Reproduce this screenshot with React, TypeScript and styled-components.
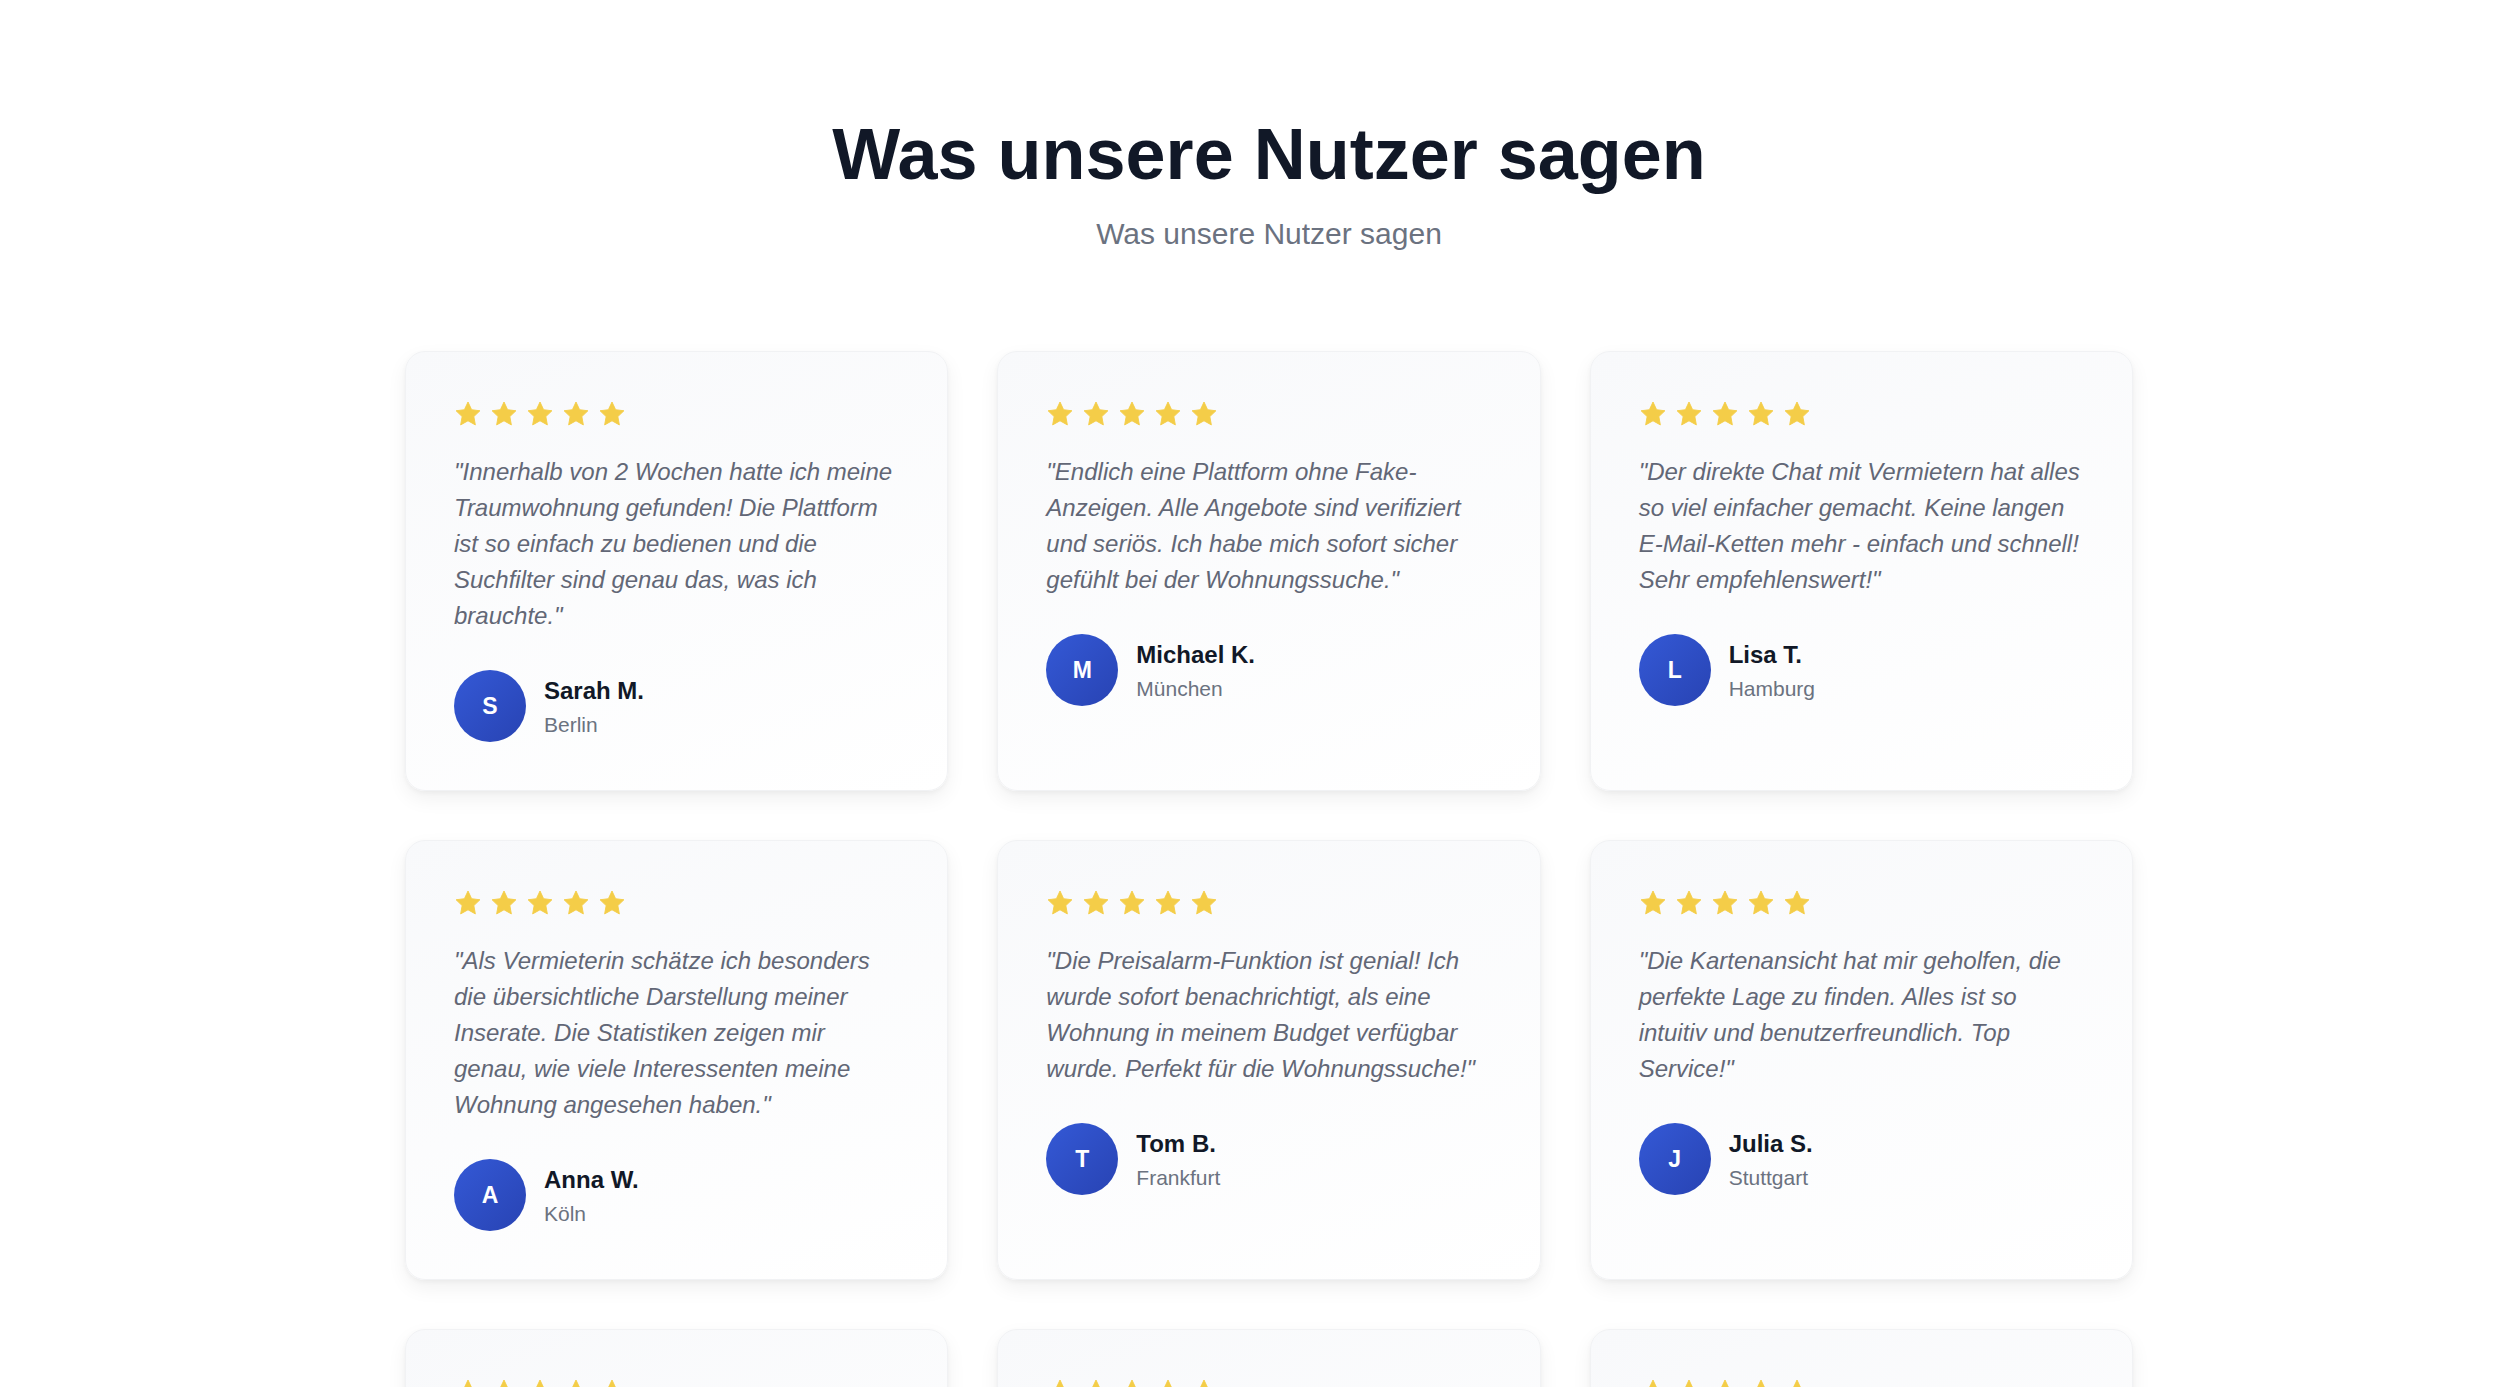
import React from 'react';
import styled, {createGlobalStyle} from 'styled-components';

interface Testimonial {
  quote: string;
  name: string;
  city: string;
}

const testimonials: Testimonial[] = [
  {
    quote:
      'Innerhalb von 2 Wochen hatte ich meine Traumwohnung gefunden! Die Plattform ist so einfach zu bedienen und die Suchfilter sind genau das, was ich brauchte.',
    name: 'Sarah M.',
    city: 'Berlin',
  },
  {
    quote:
      'Endlich eine Plattform ohne Fake-Anzeigen. Alle Angebote sind verifiziert und seriös. Ich habe mich sofort sicher gefühlt bei der Wohnungssuche.',
    name: 'Michael K.',
    city: 'München',
  },
  {
    quote:
      'Der direkte Chat mit Vermietern hat alles so viel einfacher gemacht. Keine langen E-Mail-Ketten mehr - einfach und schnell! Sehr empfehlenswert!',
    name: 'Lisa T.',
    city: 'Hamburg',
  },
  {
    quote:
      'Als Vermieterin schätze ich besonders die übersichtliche Darstellung meiner Inserate. Die Statistiken zeigen mir genau, wie viele Interessenten meine Wohnung angesehen haben.',
    name: 'Anna W.',
    city: 'Köln',
  },
  {
    quote:
      'Die Preisalarm-Funktion ist genial! Ich wurde sofort benachrichtigt, als eine Wohnung in meinem Budget verfügbar wurde. Perfekt für die Wohnungssuche!',
    name: 'Tom B.',
    city: 'Frankfurt',
  },
  {
    quote:
      'Die Kartenansicht hat mir geholfen, die perfekte Lage zu finden. Alles ist so intuitiv und benutzerfreundlich. Top Service!',
    name: 'Julia S.',
    city: 'Stuttgart',
  },
  {
    quote:
      'Schnelle Rückmeldungen und ehrliche Angebote. So macht die Wohnungssuche endlich wieder Spaß!',
    name: 'Jonas F.',
    city: 'Leipzig',
  },
  {
    quote:
      'Die Besichtigungstermine lassen sich direkt online vereinbaren. Das hat mir sehr viel Zeit gespart.',
    name: 'Miriam H.',
    city: 'Düsseldorf',
  },
  {
    quote:
      'Übersichtlich, modern und zuverlässig. Ich habe meine neue Wohnung in Rekordzeit gefunden.',
    name: 'David L.',
    city: 'Dresden',
  },
];

const GlobalStyle = createGlobalStyle`
  html, body {
    margin: 0;
    padding: 0;
    background: #ffffff;
  }

  body {
    font-family: 'Liberation Sans', Arial, sans-serif;
    color: #111827;
  }

  * {
    box-sizing: border-box;
  }
`;

const Page = styled.section`
  padding: 111px 0 96px 31px;
`;

const Container = styled.div`
  width: 1728px;
  margin: 0 auto;
`;

const Header = styled.header`
  text-align: center;
  margin-bottom: 95px;
`;

const Title = styled.h2`
  margin: 0 0 14px;
  font-size: 72px;
  line-height: 1.2;
  font-weight: 700;
  color: #111827;
`;

const Subtitle = styled.p`
  margin: 0;
  font-size: 30px;
  line-height: 1.5;
  color: #6b7280;
`;

const Grid = styled.div`
  display: grid;
  grid-template-columns: repeat(3, 1fr);
  column-gap: 49px;
  row-gap: 49px;
`;

const Card = styled.article`
  display: flex;
  flex-direction: column;
  padding: 48px;
  border-radius: 20px;
  border: 1px solid #f1f2f4;
  background: linear-gradient(160deg, #f8f9fb 0%, #ffffff 100%);
  box-shadow: 0 8px 20px rgba(0, 0, 0, 0.06), 0 2px 5px rgba(0, 0, 0, 0.04);
`;

const Stars = styled.div`
  display: flex;
  gap: 8px;
  height: 36px;
  padding-top: 1px;
  margin-bottom: 18px;
`;

const Quote = styled.p`
  margin: 0 0 36px;
  font-size: 24px;
  line-height: 1.5;
  font-style: italic;
  color: #626776;
`;

const Author = styled.div`
  display: flex;
  align-items: center;
  gap: 18px;
`;

const Avatar = styled.div`
  flex: 0 0 72px;
  width: 72px;
  height: 72px;
  border-radius: 50%;
  display: flex;
  align-items: center;
  justify-content: center;
  background: linear-gradient(135deg, #3459d6 0%, #2843b3 100%);
  color: #ffffff;
  font-size: 23px;
  font-weight: 700;
`;

const AuthorInfo = styled.div`
  display: flex;
  flex-direction: column;
`;

const Name = styled.span`
  font-size: 24px;
  line-height: 1.5;
  font-weight: 700;
  color: #111827;
`;

const City = styled.span`
  font-size: 21px;
  line-height: 1.5;
  color: #6b7280;
`;

const Star = () => (
  <svg width="28" height="27" viewBox="0 0 24 23" aria-hidden="true">
    <path
      d="M12 0.8l3.1 6.6 7.1.9-5.2 5 1.3 7.1L12 16.9l-6.3 3.5 1.3-7.1-5.2-5 7.1-.9z"
      fill="#f4cd48"
      stroke="#f4cd48"
      strokeWidth="0.8"
      strokeLinejoin="round"
    />
  </svg>
);

const TestimonialCard = ({quote, name, city}: Testimonial) => (
  <Card>
    <Stars>
      {[0, 1, 2, 3, 4].map(i => (
        <Star key={i} />
      ))}
    </Stars>
    <Quote>"{quote}"</Quote>
    <Author>
      <Avatar>{name.charAt(0)}</Avatar>
      <AuthorInfo>
        <Name>{name}</Name>
        <City>{city}</City>
      </AuthorInfo>
    </Author>
  </Card>
);

export default function App() {
  return (
    <>
      <GlobalStyle />
      <Page>
        <Container>
          <Header>
            <Title>Was unsere Nutzer sagen</Title>
            <Subtitle>Was unsere Nutzer sagen</Subtitle>
          </Header>
          <Grid>
            {testimonials.map(t => (
              <TestimonialCard key={t.name} {...t} />
            ))}
          </Grid>
        </Container>
      </Page>
    </>
  );
}
